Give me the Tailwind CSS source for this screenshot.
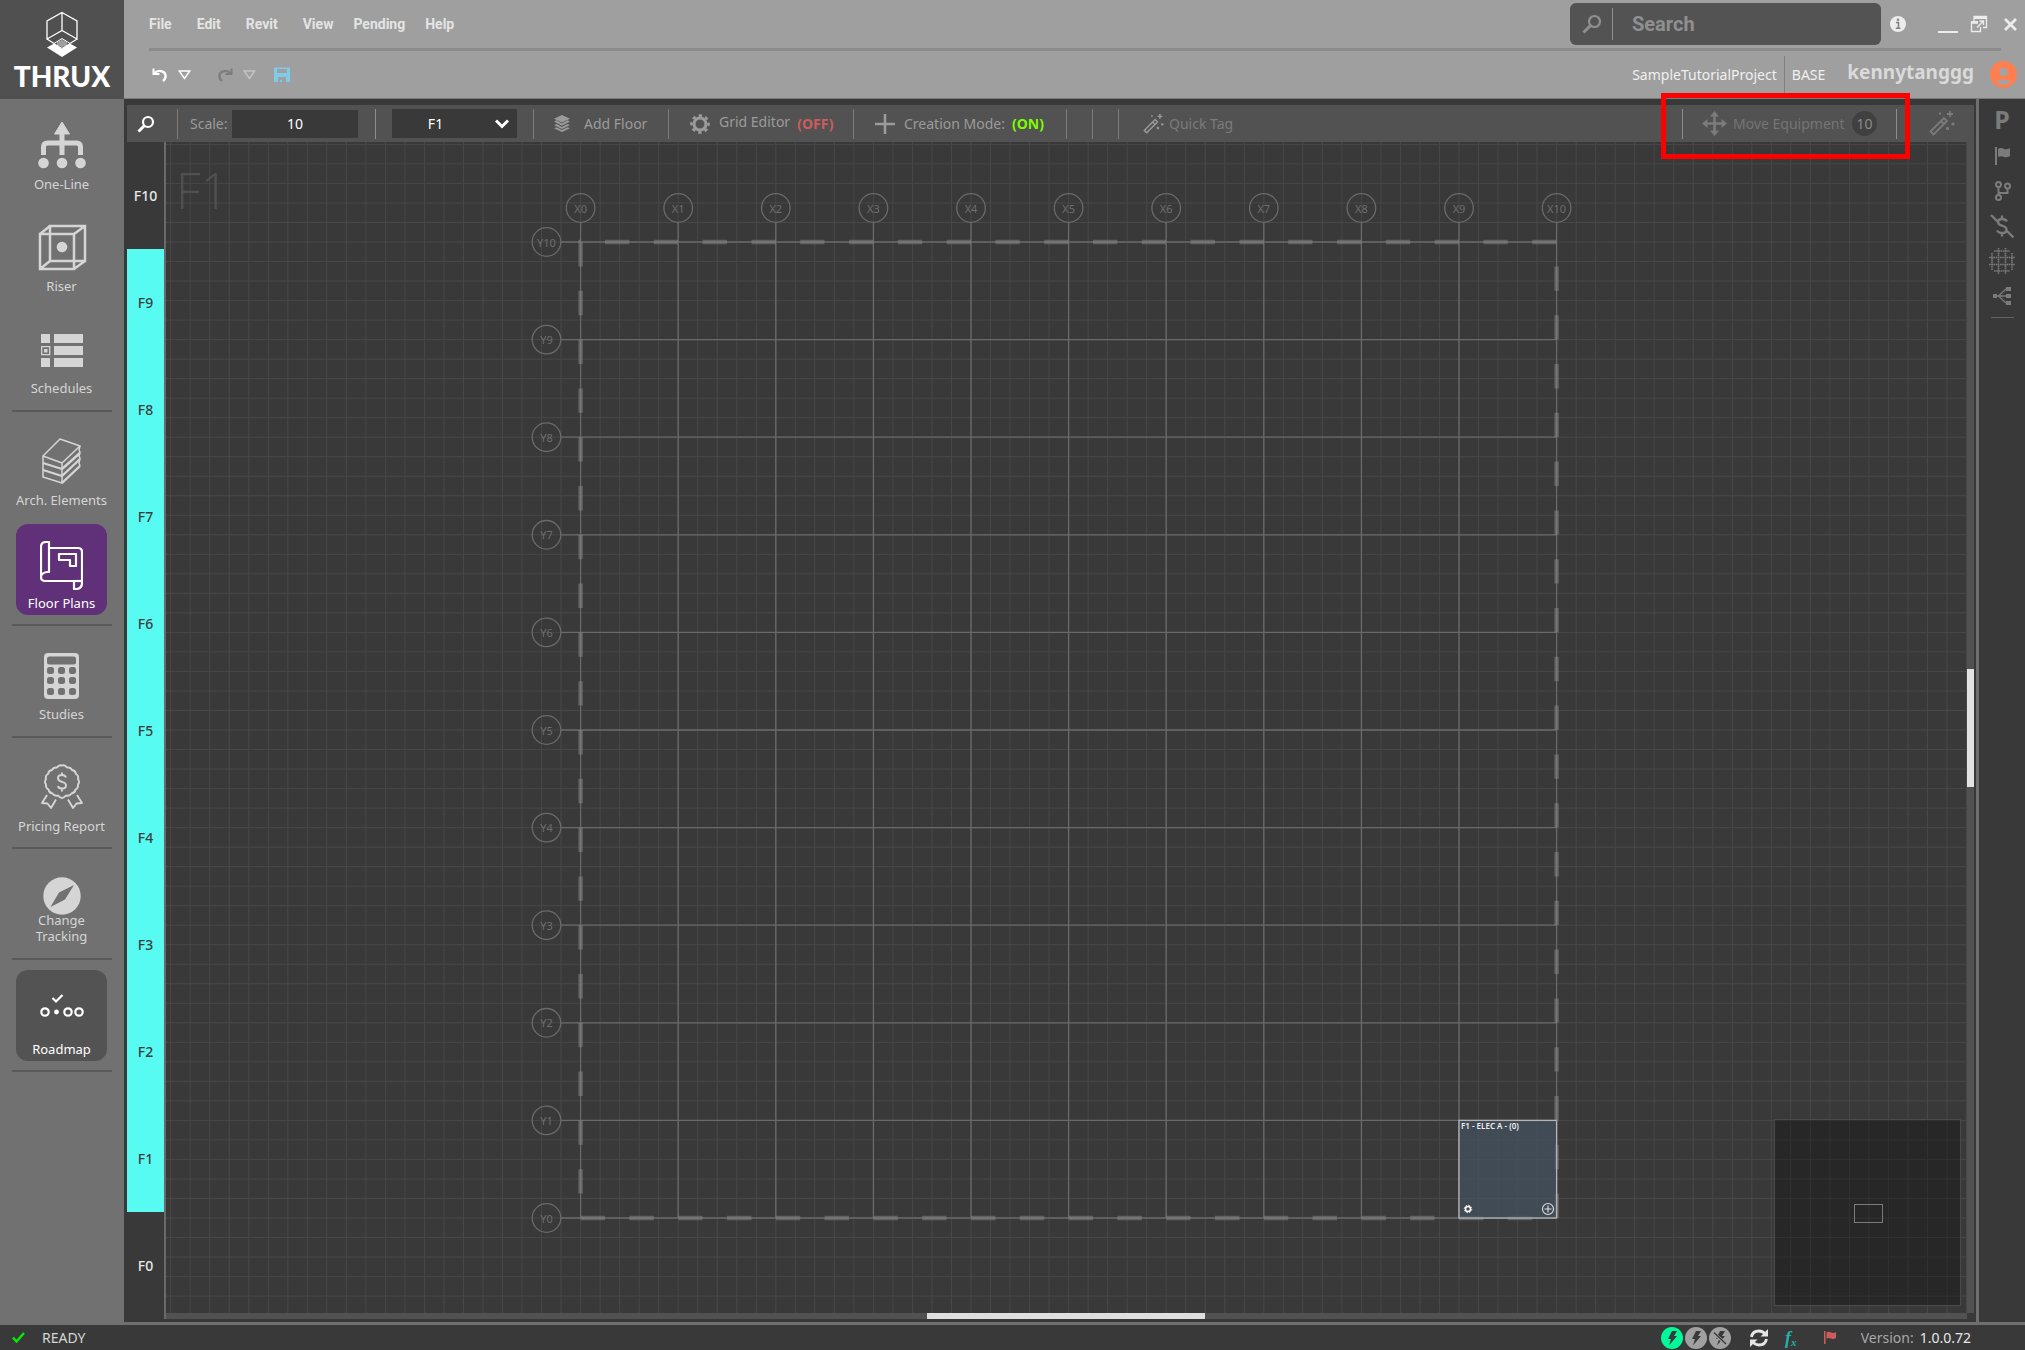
<!DOCTYPE html>
<html lang="en">

<head>
    <meta charset="utf-8">
    <meta name="viewport" content="width=device-width, initial-scale=1.0">
    <title>THRUX - Floor Plans</title>
    <script src="https://cdn.jsdelivr.net/npm/@tailwindcss/browser@4"></script>
</head>

<body class="flex h-screen flex-col overflow-hidden bg-[#393939] font-['Noto_Sans','Open_Sans',sans-serif] text-sm text-[#d5d5d5]">

    <!-- Header -->
    <header class="flex h-[99px] shrink-0">
        <div class="flex w-[124px] shrink-0 flex-col items-center bg-[#505050] pt-[11px] text-white">
            <svg class="h-[47px] w-[34px]" viewBox="0 0 34 47" fill="none" stroke="currentColor" stroke-width="1.3">
                <path d="M17 1.500 32 10v18L17 19.500 2 28V10z M17 1.500v18 M2 28l7 4.500M32 28l-7 4.500" />
                <path d="M2 36.500 10 32l7 6 7-6 8 4.500L17 46z" fill="currentColor" stroke="none" />
                <path d="M17 27.500 9 32.500l8 5 8-5z" fill="#505050" stroke-width="1" />
                <path d="M13 30.500v5M15 29.500v6M17 28.500v8M19 29.500v6M21 30.500v5" stroke-width=".9" />
            </svg>
            <div class="mt-[3px] font-['Lato',sans-serif] text-[28px] leading-[30px] font-black">THRUX</div>
        </div>

        <div class="flex flex-1 flex-col border-b border-[#7a7a7a] bg-[#9f9f9f] pl-[25px]">
            <div class="mr-6 flex h-[51px] shrink-0 justify-between border-b-[3px] border-[#8b8b8b]">
                <nav class="flex items-center gap-5 font-['Roboto',sans-serif] text-sm font-bold text-[#e4e4e4]">
                    <button class="pr-[5px]">File</button>
                    <button class="pr-[5px]">Edit</button>
                    <button class="pr-[5px]">Revit</button>
                    <button>View</button>
                    <button>Pending</button>
                    <button>Help</button>
                </nav>
                <div class="-mr-4 flex items-center">
                    <div class="mr-[9px] flex h-[42px] w-[311px] items-center rounded-md bg-[#535353] pl-3">
                        <svg class="h-5 w-5" viewBox="0 0 20 20" fill="none" stroke="#8f8f8f" stroke-width="2.200">
                            <circle cx="12.500" cy="7.500" r="5.500" />
                            <path d="M8.500 11.500 1.500 18.500" stroke-width="3" />
                        </svg>
                        <span class="ml-[10px] h-8 w-px bg-[#8f8f8f]"></span>
                        <input type="text" placeholder="Search" aria-label="Search"
                            class="ml-[19px] h-8 w-[200px] bg-transparent font-['Roboto',sans-serif] text-xl font-bold text-white outline-none placeholder:text-[#8f8f8f]">
                    </div>
                    <button aria-label="Info">
                        <svg class="h-4 w-4" viewBox="0 0 16 16">
                            <circle cx="8" cy="8" r="8" fill="#ececec" />
                            <path d="M6 6.500h2.500v5.500M5.800 12.300h4.600" stroke="#808080" stroke-width="1.500" fill="none" />
                            <circle cx="8" cy="3.800" r="1.200" fill="#808080" />
                        </svg>
                    </button>
                    <button aria-label="Minimize" class="mt-4 ml-8 h-[2px] w-5 bg-[#ececec]"></button>
                    <button aria-label="Restore" class="ml-3">
                        <svg class="h-[18px] w-[18px]" viewBox="0 0 18 18" fill="none" stroke="#ececec" stroke-width="1.300">
                            <path d="M4 6V1.500h12.500v11H13" />
                            <path d="M4 2.500h12.500" stroke-width="3" />
                            <path d="M8 7H1.500v9.500h9V12" />
                            <path d="M1.500 7.500H8" stroke-width="2.500" />
                            <path d="M7 12.500 13 6.500M9.500 6H13.500V10" />
                        </svg>
                    </button>
                    <button aria-label="Close" class="ml-4">
                        <svg class="h-[13px] w-[13px]" viewBox="0 0 13 13" stroke="#ececec" stroke-width="2.800">
                            <path d="M1 1l11 11M12 1 1 12" />
                        </svg>
                    </button>
                </div>
            </div>

            <div class="flex flex-1 justify-between">
                <div class="flex items-center pl-[3px]">
                    <button aria-label="Undo">
                        <svg class="h-4 w-4" viewBox="0 0 16 16" fill="none" stroke="#fff" stroke-width="2.400">
                            <path d="M2 6.500C7 1.500 14.500 4.500 13.500 10c-.3 1.800-1.200 3-2.500 4" />
                            <path d="M1.500 1.500v5.500h6" stroke-width="2" />
                        </svg>
                    </button>
                    <button aria-label="Undo history" class="ml-[10px]">
                        <svg class="h-[10px] w-[13px]" viewBox="0 0 13 10" fill="none" stroke="#fff" stroke-width="1.400">
                            <path d="M1.200 1h10.600L6.500 8.500z" />
                        </svg>
                    </button>
                    <button aria-label="Redo" class="ml-[26px]">
                        <svg class="h-4 w-4" viewBox="0 0 16 16" fill="none" stroke="#7d7d7d" stroke-width="2.400">
                            <path d="M14 6.500C9 1.500 1.500 4.500 2.500 10c.3 1.800 1.200 3 2.500 4" />
                            <path d="M14.500 1.500v5.500h-6" stroke-width="2" />
                        </svg>
                    </button>
                    <button aria-label="Redo history" class="ml-[10px]">
                        <svg class="h-[10px] w-[13px]" viewBox="0 0 13 10" fill="none" stroke="#c4c4c4" stroke-width="1.400">
                            <path d="M1.200 1h10.600L6.500 8.500z" />
                        </svg>
                    </button>
                    <button aria-label="Save" class="ml-[18px]">
                        <svg class="h-4 w-4" viewBox="0 0 16 16">
                            <path fill="#7ecbea" fill-rule="evenodd"
                                d="M0 1.500Q0 .5 1 .5h14q1 0 1 1V14q0 1-1 1H0z M3 2v4h10V2z M4 10v5h2v-2h2v2h4v-5z" />
                        </svg>
                    </button>
                </div>
                <div class="flex items-center">
                    <span class="pt-px text-[#f0f0f0]">SampleTutorialProject</span>
                    <span class="ml-[7px] h-[37px] w-px bg-[#7f7f7f]"></span>
                    <span class="ml-[7px] pt-px text-[#f0f0f0]">BASE</span>
                    <span class="mb-[6px] ml-[22px] text-[19px] leading-6 font-bold text-[#dadada]">kennytanggg</span>
                    <button aria-label="Account" class="mr-2 ml-4">
                        <svg class="h-[27px] w-[27px]" viewBox="0 0 27 27">
                            <circle cx="13.500" cy="13.500" r="13.500" fill="#ff7f50" />
                            <circle cx="13.500" cy="11" r="4.300" fill="#a3a3a3" />
                            <path d="M7 21c1-3.500 12-3.500 13 0-3.500 3.500-9.500 3.500-13 0z" fill="#a3a3a3" />
                        </svg>
                    </button>
                </div>
            </div>
        </div>
    </header>

    <div class="flex min-h-0 flex-1">

        <!-- Sidebar -->
        <aside class="flex w-[124px] shrink-0 flex-col items-center bg-[#717171] pt-[7px] pr-px text-[13px] leading-4">
            <button class="flex h-[90px] w-[90px] flex-col items-center justify-end pb-1">
                <svg class="mb-[6px] h-12 w-12" viewBox="0 0 48 48" fill="#d5d5d5">
                    <path d="M24 0l7.500 12h-15z" stroke="#d5d5d5" stroke-width="1" stroke-linejoin="round" />
                    <path d="M24 10v23M5.500 33V25q0-4 4-4h29q4 0 4 4v8" fill="none" stroke="#d5d5d5" stroke-width="5" />
                    <circle cx="5.500" cy="41" r="5.300" />
                    <circle cx="24" cy="41" r="5.300" />
                    <circle cx="42.500" cy="41" r="5.300" />
                </svg>
                <span>One-Line</span>
            </button>
            <button class="mt-3 flex h-[90px] w-[90px] flex-col items-center justify-end pb-1">
                <svg class="mb-[6px] h-12 w-[50px]" viewBox="0 0 50 48" fill="none" stroke="#d5d5d5" stroke-width="2.500">
                    <path d="M3 10h34v35H3zM13 2h35v35H13zM3 10l10-8M37 10l11-8M3 45l10-8M37 45l11-8" />
                    <circle cx="25" cy="23" r="5.300" fill="#d5d5d5" stroke="none" />
                </svg>
                <span>Riser</span>
            </button>
            <button class="mt-3 flex h-[90px] w-[90px] flex-col items-center justify-end pb-1">
                <svg class="mb-3 h-[34px] w-[42px]" viewBox="0 0 42 34" fill="#d5d5d5">
                    <path d="M0 0h9v9H0zM0 24h9v9H0zM13 0h29v9H13zM13 12h29v9H13zM13 24h29v9H13z" />
                    <path d="M.7 12.700h8v8h-8z" fill="none" stroke="#d5d5d5" stroke-width="1.300" />
                    <path d="M3 15h3.500v3.500H3z" />
                </svg>
                <span>Schedules</span>
            </button>
            <hr class="my-[10px] h-[2px] w-[100px] border-0 bg-[#5a5a5a]">
            <button class="flex h-[90px] w-[92px] flex-col items-center justify-end pb-1">
                <svg class="mb-2 h-[46px] w-10" viewBox="0 0 40 46" fill="none" stroke="#d5d5d5" stroke-width="1.500" stroke-linejoin="round">
                    <path d="M1 18 18 1l20 7-18 17zM1 18v21l19 6V25" />
                    <path d="M1 25l19 6M1 32l19 6" stroke-width="2" />
                    <path d="M20 31 38 15M20 38 38 21M20 45 38 28" stroke-width="2.400" />
                    <path d="M38 8l-1 4 1 2-1 4 1 2-1 5 1 3" />
                </svg>
                <span class="whitespace-nowrap">Arch. Elements</span>
            </button>
            <button class="mt-3 flex h-[91px] w-[91px] flex-col items-center justify-end rounded-xl bg-[#603079] pb-1 text-white">
                <svg class="mb-1 h-[50px] w-[43px]" viewBox="0 0 43 50" fill="none" stroke="#fff" stroke-width="2.200" stroke-linejoin="round">
                    <path d="M1 35V6q0-5 5-5h3v30H7q-6 1-6 5 0 4 4 4h29V48h3q5-1 5-6V11q0-4-4-4H10" />
                    <path d="M34 40h8" />
                    <path d="M19 13h17v12h-6v-6H19z" />
                </svg>
                <span>Floor Plans</span>
            </button>
            <hr class="mt-[9px] mb-[10px] h-[2px] w-[100px] border-0 bg-[#5a5a5a]">
            <button class="flex h-[90px] w-[90px] flex-col items-center justify-end pb-1">
                <svg class="mb-[7px] h-[46px] w-[35px]" viewBox="0 0 35 46">
                    <rect width="35" height="46" rx="4" fill="#d5d5d5" />
                    <g fill="#717171">
                        <rect x="3" y="3.500" width="29" height="8" rx="2.500" />
                        <rect x="3" y="14" width="7" height="7" rx="2.500" />
                        <rect x="14" y="14" width="7" height="7" rx="2.500" />
                        <rect x="25" y="14" width="7" height="7" rx="2.500" />
                        <rect x="3" y="24" width="7" height="7" rx="2.500" />
                        <rect x="14" y="24" width="7" height="7" rx="2.500" />
                        <rect x="25" y="24" width="7" height="7" rx="2.500" />
                        <rect x="3" y="35" width="7" height="7" rx="2.500" />
                        <rect x="14" y="35" width="7" height="7" rx="2.500" />
                        <rect x="25" y="35" width="7" height="7" rx="2.500" />
                    </g>
                </svg>
                <span>Studies</span>
            </button>
            <hr class="my-[10px] h-[2px] w-[100px] border-0 bg-[#5a5a5a]">
            <button class="flex h-[90px] w-[92px] flex-col items-center justify-end pb-1">
                <svg class="mb-[9px] h-[45px] w-[42px]" viewBox="0 0 42 45" fill="none" stroke="#d5d5d5" stroke-width="1.900" stroke-linejoin="round">
                    <path d="M21 1.500q3-1 5 2 3.500-.5 5 2.500 3.500.5 4 4 3 1.500 2 5 2 3 0 5.500.5 3.500-2.500 5-.5 3.500-4 4-2 3-5.500 2-2 2.500-4 2.500t-4-2.500q-3.500 1-5.500-2-3.500-.5-4-4-3-1.500-2.500-5-2-2.500 0-5.500-1-3.500 2-5 .5-3.500 4-4 1.500-3 5-2.500 2-3 5-2z" />
                    <path d="M25 13.500q-1-2.500-4-2.500-4 0-4 3.200 0 2.500 4 3.600 4 1 4 3.700 0 3-4 3-3.500 0-4-2.500M21 8.500V11M21 24.500v3" />
                    <path d="M6 31 1 39l5.500.5L10 44l5-8.500M36 31l5 8-5.500.5L32 44l-5-8.500" />
                </svg>
                <span class="whitespace-nowrap">Pricing Report</span>
            </button>
            <hr class="mt-[9px] mb-[10px] h-[2px] w-[100px] border-0 bg-[#5a5a5a]">
            <button class="flex h-[90px] w-[90px] flex-col items-center justify-end">
                <svg class="-mb-[3px] h-[38px] w-[38px]" viewBox="0 0 38 38">
                    <circle cx="19" cy="19" r="18.700" fill="#d5d5d5" />
                    <path d="M31 8 22 22.500 7.500 30 16 15.500z" fill="#717171" />
                </svg>
                <span class="mb-[5px]">Change<br>Tracking</span>
            </button>
            <hr class="mt-[9px] mb-[10px] h-[2px] w-[100px] border-0 bg-[#5a5a5a]">
            <button class="flex h-[91px] w-[91px] flex-col items-center justify-end rounded-xl bg-[#535353] pb-1 text-white">
                <svg class="mb-6 h-[23px] w-11" viewBox="0 0 44 23" fill="none" stroke="#fff" stroke-width="2.200">
                    <circle cx="5" cy="18" r="3.700" />
                    <circle cx="16.500" cy="18" r="2.400" fill="#fff" stroke="none" />
                    <circle cx="28" cy="18" r="3.700" />
                    <circle cx="39" cy="18" r="3.700" />
                    <path d="M12.500 4l3.500 3.500L22.500 1" />
                </svg>
                <span>Roadmap</span>
            </button>
            <hr class="mt-[9px] h-[2px] w-[100px] border-0 bg-[#5a5a5a]">
        </aside>

        <div class="flex min-w-0 flex-1 border-b-[3px] border-[#6f6f6f]">
            <main class="flex min-w-0 flex-1 flex-col border-r-[3px] border-[#6f6f6f] pt-[6px] pr-[2px] pb-[3px] pl-[3px]">

                <!-- Toolbar -->
                <div class="flex h-[37px] shrink-0 items-center justify-between bg-[#525252] text-[#9b9b9b]">
                    <div class="flex items-center">
                        <button aria-label="Find" class="w-[50px] pl-[10px]">
                            <svg class="h-[18px] w-[18px]" viewBox="0 0 18 18" fill="none" stroke="#fff" stroke-width="2.200">
                                <circle cx="11" cy="7" r="5" />
                                <path d="M7.500 10.500 1.500 16.500" stroke-width="3" />
                            </svg>
                        </button>
                        <span class="h-[30px] w-px bg-[#7d7d7d]"></span>
                        <div class="flex w-[197px] items-center pl-3">
                            <label for="scale" class="w-[42px]">Scale:</label>
                            <input id="scale" type="text" value="10" class="h-7 w-[126px] bg-[#393939] text-center text-white">
                        </div>
                        <span class="h-[30px] w-px bg-[#8d8d8d]"></span>
                        <div class="relative ml-4 w-[141px]">
                            <select aria-label="Floor" class="h-[29px] w-[125px] appearance-none bg-[#393939] pr-[38px] text-center text-white">
                                <option>F1</option>
                            </select>
                            <svg class="pointer-events-none absolute top-[10px] left-[103px] h-[10px] w-[14px]" viewBox="0 0 14 10" fill="none" stroke="#fff" stroke-width="3">
                                <path d="M1 1.500l6 6 6-6" />
                            </svg>
                        </div>
                        <span class="h-[30px] w-px bg-[#7d7d7d]"></span>
                        <button class="flex w-[134px] items-center pl-5">
                            <svg class="h-[17px] w-4" viewBox="0 0 16 17" fill="#9b9b9b">
                                <path d="M8 0l8 3.700L8 7.500 0 3.700z" />
                                <path d="M0 6.500l2.500-1.200L8 8.500l5.500-3.200L16 6.500l-8 4.300zM0 10l2.500-1 5.500 3L13.500 9l2.500 1-8 4z" />
                                <path d="M0 13.200l2.500-1L8 15l5.500-2.800 2.500 1L8 17z" />
                            </svg>
                            <span class="ml-[14px]">Add Floor</span>
                        </button>
                        <span class="h-[30px] w-px bg-[#7d7d7d]"></span>
                        <button class="flex w-[184px] items-center pl-[21px]">
                            <svg class="h-5 w-5" viewBox="0 0 20 20" fill="none" stroke="#9b9b9b">
                                <circle cx="10" cy="10" r="6" stroke-width="3" />
                                <circle cx="10" cy="10" r="8.500" stroke-width="2.600" stroke-dasharray="3.300 3.376" stroke-dashoffset="1.600" />
                            </svg>
                            <span class="mb-1 ml-[9px]">Grid Editor</span>
                            <span class="ml-[7px] font-bold text-[#cd5c5c]">(OFF)</span>
                        </button>
                        <span class="h-[30px] w-px bg-[#7d7d7d]"></span>
                        <button class="flex w-[212px] items-center pl-[21px]">
                            <svg class="h-5 w-5" viewBox="0 0 20 20" stroke="#9b9b9b" stroke-width="2.600">
                                <path d="M10 0v20M0 10h20" />
                            </svg>
                            <span class="ml-[9px]">Creation Mode:</span>
                            <span class="ml-[7px] font-bold text-[#7cfc00]">(ON)</span>
                        </button>
                        <span class="h-[30px] w-px bg-[#7d7d7d]"></span>
                        <span class="ml-[25px] h-[30px] w-px bg-[#7d7d7d]"></span>
                        <span class="ml-[25px] h-[30px] w-px bg-[#7d7d7d]"></span>
                        <button class="ml-6 flex items-center text-[#7b7b7b]">
                            <svg class="h-5 w-[21px]" viewBox="0 0 26 25" fill="none" stroke="#9b9b9b" stroke-width="1.800">
                                <path d="M1.500 20.500 15 7l3 3L4.500 23.500zM12 10l3 3" />
                                <path d="M21 0v6M18 3h6M11 1.500v2M10 2.500h2M24 11.500v3M22.500 13h3M18.500 16v3M17 17.500h3" />
                            </svg>
                            <span class="ml-[5px]">Quick Tag</span>
                        </button>
                    </div>

                    <div class="flex items-center">
                        <div class="relative flex h-[37px] items-center">
                            <span class="h-[30px] w-px bg-[#8d8d8d]"></span>
                            <button class="flex w-[213px] items-center pl-[19px] text-[#757575]">
                                <svg class="h-[25px] w-[25px]" viewBox="0 0 25 25" fill="#7b7b7b">
                                    <path d="M12.500 0l4.500 5.500H8zM12.500 25l4.500-5.500H8zM0 12.500 5.500 8v9zM25 12.500 19.500 8v9z" />
                                    <path d="M11.200 5h2.600v15h-2.600zM5 11.200h15v2.600H5z" />
                                </svg>
                                <span class="ml-[6px] flex-1 text-left whitespace-nowrap">Move Equipment</span>
                                <span class="mr-[19px] flex h-[25px] w-[25px] items-center justify-center rounded-full bg-[#404040] text-[#8b8b8b]">10</span>
                            </button>
                            <span class="h-[30px] w-px bg-[#8d8d8d]"></span>
                            <div class="pointer-events-none absolute -top-3 -right-[13px] -bottom-[17px] -left-[21px] z-10 border-[5px] border-[#ff0000]"></div>
                        </div>
                        <button aria-label="Wand" class="mr-[19px] ml-8">
                            <svg class="h-[25px] w-[26px]" viewBox="0 0 26 25" fill="none" stroke="#7b7b7b" stroke-width="1.800">
                                <path d="M1.500 20.500 15 7l3 3L4.500 23.500zM12 10l3 3" />
                                <path d="M21 0v6M18 3h6M11 1.500v2M10 2.500h2M24 11.500v3M22.500 13h3M18.500 16v3M17 17.500h3" />
                            </svg>
                        </button>
                    </div>
                </div>

                <div class="flex min-h-0 flex-1">
                    <!-- Floor strip -->
                    <div class="flex w-[39px] shrink-0 flex-col border-r-2 border-[#6a6a6a] font-medium text-[#3d3d3d]">
                        <button class="flex-1 text-[#e8e8e8]">F10</button>
                        <button class="flex-1 bg-[#57fbf1]">F9</button>
                        <button class="flex-1 bg-[#57fbf1]">F8</button>
                        <button class="flex-1 bg-[#57fbf1]">F7</button>
                        <button class="flex-1 bg-[#57fbf1]">F6</button>
                        <button class="flex-1 bg-[#57fbf1]">F5</button>
                        <button class="flex-1 bg-[#57fbf1]">F4</button>
                        <button class="flex-1 bg-[#57fbf1]">F3</button>
                        <button class="flex-1 bg-[#57fbf1]">F2</button>
                        <button class="flex-1 bg-[#57fbf1]">F1</button>
                        <button class="flex-1 text-[#e8e8e8]">F0</button>
                    </div>

                    <div class="flex min-w-0 flex-1 flex-col">
                        <div class="relative min-h-0 flex-1 overflow-hidden">
                            <svg class="absolute inset-0 h-full w-full">
                                <g id="minorLines" stroke="#484848" stroke-width="1"></g>
                                <g id="axes" fill="none" stroke="#6a6a6a" stroke-width="1.300"></g>
                                <path d="M414.600 100v976h976v-976z" fill="none" stroke="#8a8a8a" stroke-opacity=".5" stroke-width="4.500" stroke-dasharray="24.400 24.400" />
                                <g id="axisLabels" class="text-[11px]" fill="#6e6e6e" text-anchor="middle"></g>

                                <!-- Electrical room -->
                                <rect x="1293" y="978.400" width="97.600" height="97.600" fill="#44525f" fill-opacity=".75" stroke="#b4b4b4" stroke-width="1.300" />
                                <text x="1295" y="987" class="text-[8px] font-semibold" fill="#f0f0f0">F1 - ELEC A - (0)</text>
                                <circle cx="1302" cy="1067" r="2.500" fill="none" stroke="#fff" stroke-width="1.400" />
                                <circle cx="1302" cy="1067" r="3.700" fill="none" stroke="#fff" stroke-width="1" stroke-dasharray="1.500 1.400" />
                                <g fill="none" stroke="#e0e0e0" stroke-width="1.100">
                                    <circle cx="1382" cy="1067" r="5.500" />
                                    <path d="M1382 1063.500v7M1378.500 1067h7" />
                                </g>
                            </svg>
                            <div class="absolute top-[21px] left-[10px] font-['Open_Sans',sans-serif] text-[49px] leading-[54px] font-light text-[#505050]">F1</div>
                            <!-- Minimap -->
                            <div class="absolute right-[6px] bottom-[7px] h-[187px] w-[187px] border border-[#4b4b4b] bg-black/30">
                                <div class="absolute top-[84px] left-[79px] h-[19px] w-[29px] border border-[#7b7b7b]"></div>
                            </div>
                        </div>
                        <div class="h-[6px] shrink-0 bg-[#515151]">
                            <div class="ml-[761px] h-full w-[278px] bg-[#dedede]"></div>
                        </div>
                    </div>
                    <div class="mb-[6px] w-[7px] shrink-0 bg-[#515151]">
                        <div class="mt-[527px] h-[118px] bg-[#e2e2e2]"></div>
                    </div>
                </div>
            </main>

            <!-- Right rail -->
            <div class="flex w-[46px] shrink-0 flex-col items-center pt-2 text-[#7b7b7b]">
                <button class="h-6 font-['Noto_Sans',sans-serif] text-[25px] leading-6 font-bold">P</button>
                <button aria-label="Flag" class="mt-4">
                    <svg class="h-[18px] w-[15px]" viewBox="0 0 15 18" fill="currentColor">
                        <path d="M0 0h2v18H0zM3 2q3-2 6 0 3 1 6-1v8q-3 2-6 1-3-1.500-6 0z" />
                    </svg>
                </button>
                <button aria-label="Branch" class="mt-4 pl-[2px]">
                    <svg class="h-5 w-4" viewBox="0 0 16 20" fill="none" stroke="currentColor" stroke-width="2">
                        <circle cx="3.500" cy="3.500" r="2.500" />
                        <circle cx="3.500" cy="16.500" r="2.500" />
                        <circle cx="12.500" cy="5" r="2.500" />
                        <path d="M3.500 6v8M12.500 7.500V12h-9" />
                    </svg>
                </button>
                <button aria-label="Pricing off" class="mt-[13px]">
                    <svg class="h-6 w-6" viewBox="0 0 24 24" fill="none" stroke="currentColor" stroke-width="2.400">
                        <path d="M1 1l6.500 6.500M17 17l6.500 6.500M17 7.500Q15.500 5 12 5 8 5 8 8q0 2.500 4 3.700 4.500 1.300 4.500 4 0 3.300-4.500 3.300-3.500 0-5-2.500M12 1.500V5M12 19v3.500" />
                    </svg>
                </button>
                <button aria-label="Mesh" class="mt-[10px]">
                    <svg class="h-[26px] w-[26px]" viewBox="0 0 26 26" fill="none" stroke="currentColor" stroke-width="1.600" stroke-dasharray="1.600 .6">
                        <path d="M9.500 0v26M16.500 0v26M0 9.500h26M0 16.500h26" />
                        <path d="M3 22V5M23 22V5M5 3h16M5 23h16" />
                    </svg>
                </button>
                <button aria-label="Tree" class="mt-[13px]">
                    <svg class="h-[18px] w-[18px]" viewBox="0 0 18 18" fill="currentColor">
                        <path d="M0 7h4v4H0zM13 0h5v4h-5zM13 7h5v4h-5zM13 14h5v4h-5z" />
                        <path d="M4 9h9M5.500 9 13 2M5.500 9l7.500 7" fill="none" stroke="currentColor" stroke-width="1.300" />
                    </svg>
                </button>
                <hr class="mt-3 h-px w-[23px] border-0 bg-[#626262]">
            </div>
        </div>
    </div>

    <!-- Status bar -->
    <footer class="flex h-[25px] shrink-0 items-center justify-between pr-[54px] pl-3">
        <div class="flex items-center">
            <svg class="h-[11px] w-[13px]" viewBox="0 0 13 11" fill="none" stroke="#00f000" stroke-width="2.400">
                <path d="M1 5.500 4.500 9.500 12 1" />
            </svg>
            <span class="ml-[17px]">READY</span>
        </div>
        <div class="flex items-center">
            <div class="flex gap-[2px] text-[#393939]">
                <svg class="h-[22px] w-[22px]" viewBox="0 0 22 22" fill="currentColor">
                    <circle cx="11" cy="11" r="11" fill="#00fa9a" />
                    <path d="M11 4h5l-3 5h3L8 18.500l2-6.500H7z" />
                </svg>
                <svg class="h-[22px] w-[22px]" viewBox="0 0 22 22" fill="currentColor">
                    <circle cx="11" cy="11" r="11" fill="#a0a0a0" />
                    <path d="M11 4h5l-3 5h3L8 18.500l2-6.500H7z" />
                </svg>
                <svg class="h-[22px] w-[22px]" viewBox="0 0 22 22" fill="currentColor">
                    <circle cx="11" cy="11" r="11" fill="#a0a0a0" />
                    <path d="M11 4h5l-3 5h3L8 18.500l2-6.500H7z" />
                    <path d="M4.500 6 17 17" stroke="#a0a0a0" stroke-width="3" />
                    <path d="M5 5.500 17 17" stroke="currentColor" stroke-width="1.300" />
                </svg>
            </div>
            <button aria-label="Refresh" class="ml-[19px]">
                <svg class="h-[18px] w-[18px]" viewBox="0 0 18 18" fill="none" stroke="#e6e6e6" stroke-width="2.800">
                    <path d="M1.500 8Q2.500 2 9 2q4 0 6.500 3.500M16.500 10q-1 6-7.500 6-4 0-6.500-3.500" />
                    <path d="M18 0v7.500h-7.500zM0 18v-7.500h7.500z" fill="#e6e6e6" stroke="none" />
                </svg>
            </button>
            <button class="ml-4 w-[14px] font-['Liberation_Serif',serif] text-lg leading-[22px] font-bold text-[#20b2aa] italic">f<sub class="text-[11px]">x</sub></button>
            <button aria-label="Issues" class="ml-[26px]">
                <svg class="h-[13px] w-3" viewBox="0 0 12 13" fill="#cd5c5c">
                    <path d="M0 0h1.500v13H0zM2.500 1.500q2-1.500 4.500 0 2.500 1 5-.5v6q-2.500 1.500-5 .5-2.500-1-4.500 0z" />
                </svg>
            </button>
            <span class="ml-[25px] text-[#a8a8a8]">Version:</span>
            <span class="ml-[6px] text-[#e6e6e6]">1.0.0.72</span>
        </div>
    </footer>

</body>
<script>

    var SVG_NS = 'http://www.w3.org/2000/svg';

    // Origin of the grid (X0 / Y10) and distance between two axes
    var originX = 414.6;
    var originY = 100;
    var step = 97.6;
    var size = step * 10;

    function add(parent, tag, attrs, text) {
        var el = document.createElementNS(SVG_NS, tag);
        for (const key in attrs) {
            el.setAttribute(key, attrs[key]);
        }
        if (text) {
            el.textContent = text;
        }
        document.getElementById(parent).appendChild(el);
    }

    // Minor grid, 5 cells between two axes
    for (let x = originX - 21 * step / 5; x < 4000; x += step / 5) {
        add('minorLines', 'line', { x1: x, x2: x, y1: 0, y2: '100%' });
    }
    for (let y = originY - step; y < 3000; y += step / 5) {
        add('minorLines', 'line', { x1: 0, x2: '100%', y1: y, y2: y });
    }

    // Axes with their bubbles
    for (let i = 0; i <= 10; i++) {
        const x = originX + i * step;
        const y = originY + size - i * step;

        add('axes', 'circle', { cx: x, cy: 66, r: 14.3 });
        add('axes', 'line', { x1: x, x2: x, y1: 80.3, y2: originY + size });
        add('axisLabels', 'text', { x: x, y: 70.5 }, 'X' + i);

        add('axes', 'circle', { cx: 380.5, cy: y, r: 14.3 });
        add('axes', 'line', { x1: 394.8, x2: originX + size, y1: y, y2: y });
        add('axisLabels', 'text', { x: 380.5, y: y + 4.5 }, 'Y' + i);
    }
</script>

</html>
